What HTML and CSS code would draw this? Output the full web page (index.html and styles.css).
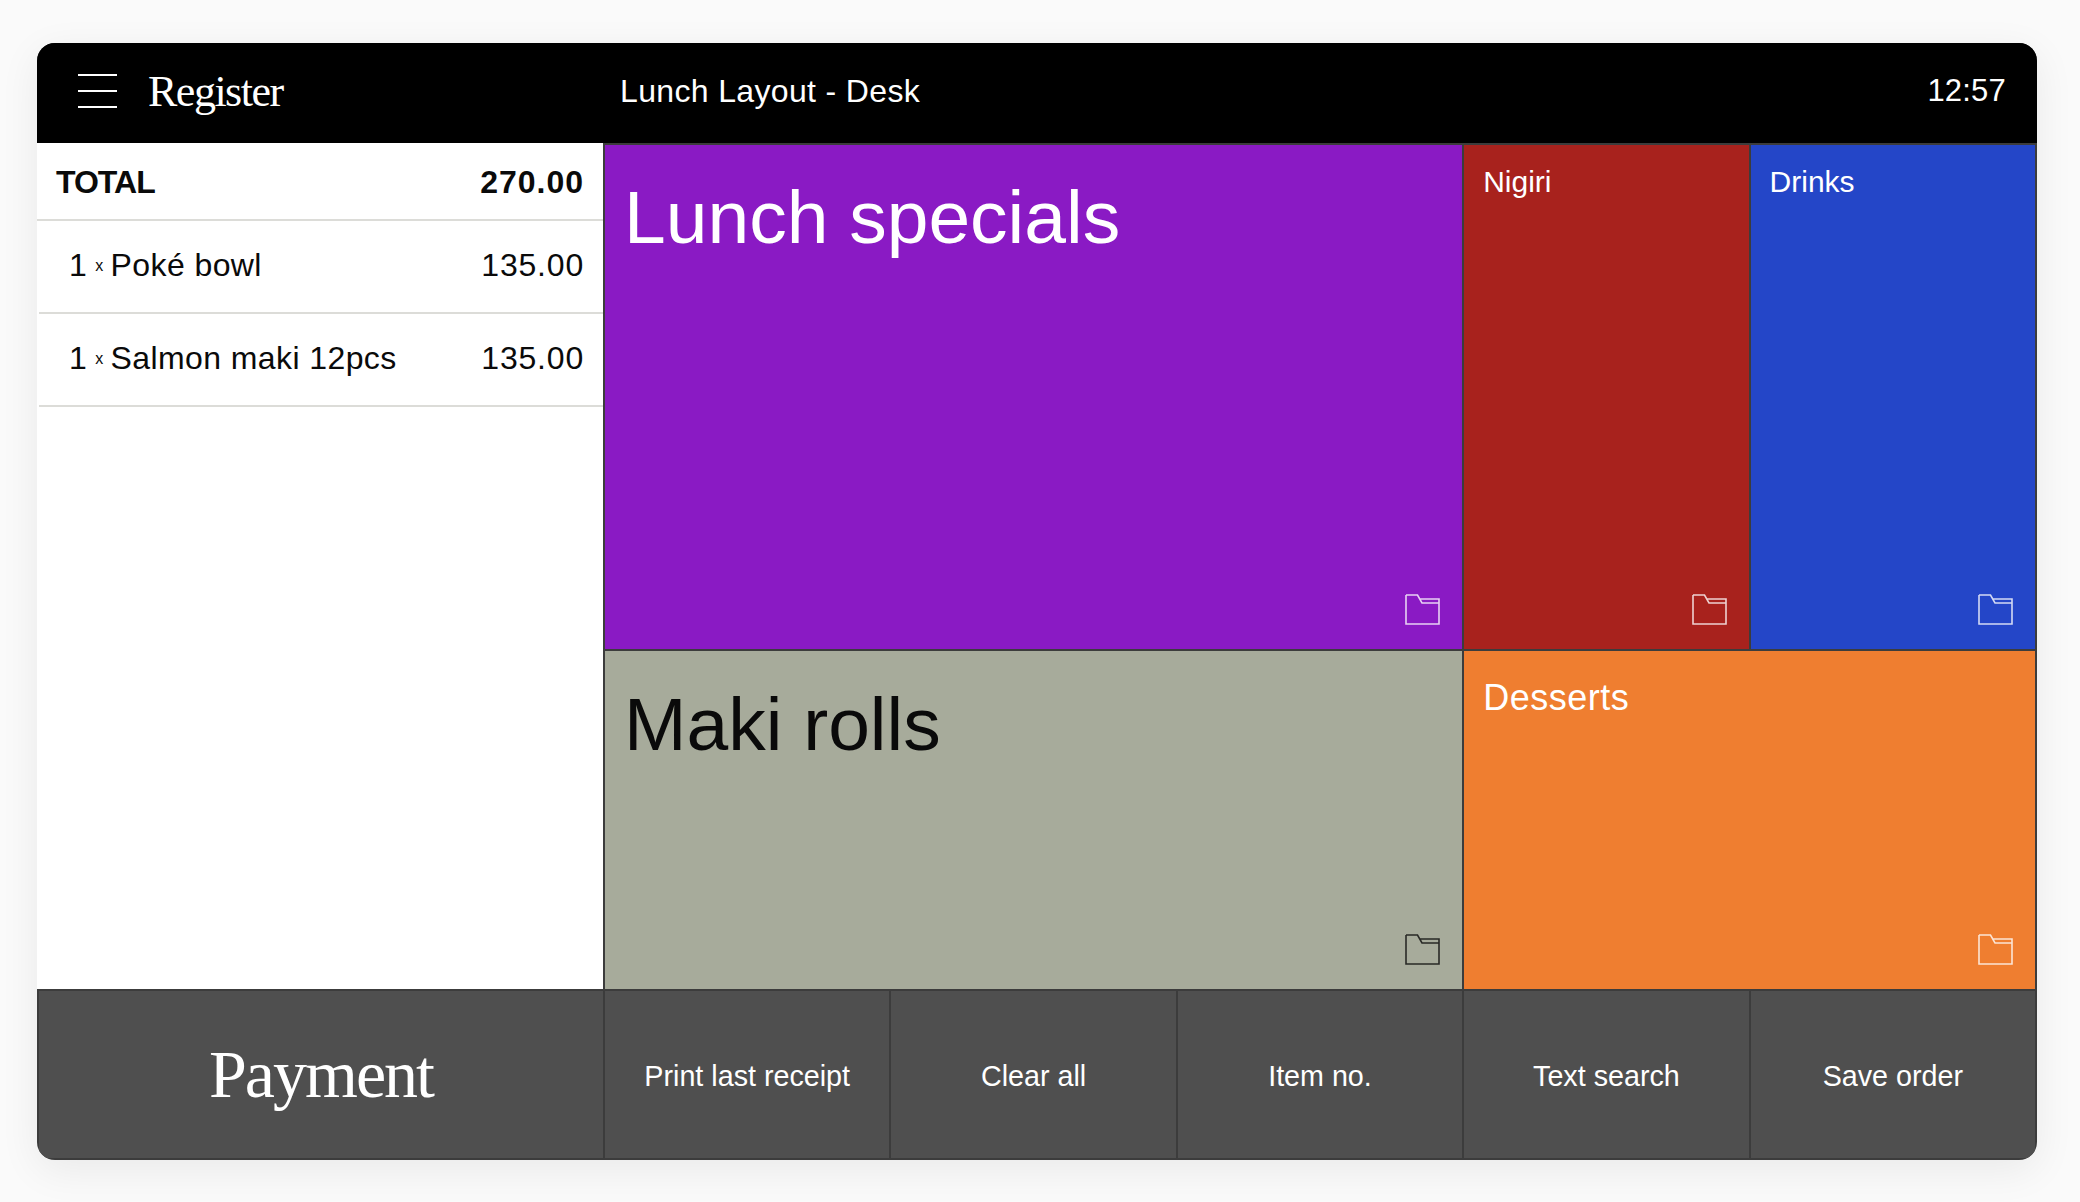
FILE: index.html
```html
<!DOCTYPE html>
<html lang="en">
<head>
  <meta charset="UTF-8" />
  <meta name="viewport" content="width=device-width, initial-scale=1.0" />
  <title>Register</title>
  <link rel="stylesheet" href="styles.css">
</head>
<body>
  <svg class="defs" width="0" height="0" aria-hidden="true">
    <symbol id="folder" viewBox="0 0 35 31">
      <path d="M1 1V30H34V5H14.5M1 1H12.5L17 9H34" fill="none" stroke="currentColor" stroke-width="1.6" />
    </symbol>
  </svg>

  <div class="register">
    <header class="topbar">
      <div class="brand">
        <button class="menu-btn" aria-label="Menu"><span></span><span></span><span></span></button>
        <span class="brand-name">Register</span>
      </div>
      <div class="layout-name">Lunch Layout - Desk</div>
      <div class="clock">12:57</div>
    </header>

    <main class="board">
      <section class="order">
        <div class="order-total">
          <span class="total-label">TOTAL</span>
          <span class="total-sum">270.00</span>
        </div>
        <div class="order-line">
          <span class="qty">1</span><span class="times">x</span><span class="item-name">Poké bowl</span>
          <span class="price">135.00</span>
        </div>
        <div class="order-line">
          <span class="qty">1</span><span class="times">x</span><span class="item-name">Salmon maki 12pcs</span>
          <span class="price">135.00</span>
        </div>
      </section>

      <a class="tile tile-big tile-purple">
        <span class="tile-label">Lunch specials</span>
        <svg class="folder"><use href="#folder" /></svg>
      </a>
      <a class="tile tile-red">
        <span class="tile-label">Nigiri</span>
        <svg class="folder"><use href="#folder" /></svg>
      </a>
      <a class="tile tile-blue">
        <span class="tile-label">Drinks</span>
        <svg class="folder"><use href="#folder" /></svg>
      </a>
      <a class="tile tile-big tile-sage">
        <span class="tile-label">Maki rolls</span>
        <svg class="folder"><use href="#folder" /></svg>
      </a>
      <a class="tile tile-wide tile-orange">
        <span class="tile-label">Desserts</span>
        <svg class="folder"><use href="#folder" /></svg>
      </a>

      <button class="action action-pay">Payment</button>
      <button class="action">Print last receipt</button>
      <button class="action">Clear all</button>
      <button class="action">Item no.</button>
      <button class="action">Text search</button>
      <button class="action">Save order</button>
    </main>
  </div>
</body>
</html>
```

FILE: styles.css
```css
body {
  margin: 0;
  height: 1202px;
  box-sizing: border-box;
  padding: 43px 43px 0 37px;
  overflow: hidden;
  background-color: #fafafa;
  font-family: "Liberation Sans", Arial, sans-serif;
  color: #0a0a0a;
}
.defs {
  position: absolute;
}
.register {
  width: 2000px;
  height: 1117px;
  display: flex;
  flex-direction: column;
  border-radius: 18px;
  overflow: hidden;
  background-color: #3c3c3c;
  box-shadow: 0 10px 40px rgba(0, 0, 0, 0.07);
}
.topbar {
  height: 96px;
  flex: none;
  display: grid;
  grid-template-columns: 583px 1fr auto;
  align-items: center;
  padding-right: 31px;
  padding-bottom: 4px;
  background-color: #000;
  color: #fff;
}
.brand {
  display: flex;
  align-items: center;
  padding-left: 41px;
}
.menu-btn {
  width: 39px;
  height: 34px;
  padding: 0;
  border: none;
  background: none;
  display: flex;
  flex-direction: column;
  justify-content: space-between;
  margin-right: 31px;
}
.menu-btn span {
  display: block;
  height: 2px;
  background-color: #fff;
}
.brand-name {
  font-family: "Liberation Serif", serif;
  font-size: 44px;
  letter-spacing: -1.5px;
}
.layout-name {
  font-size: 32px;
  letter-spacing: 0.35px;
}
.clock {
  font-size: 31px;
  letter-spacing: 0.2px;
}
.board {
  flex: 1;
  display: grid;
  grid-template-columns: 564px repeat(5, 1fr);
  grid-template-rows: 504px 338px 1fr;
  gap: 2px;
  padding: 2px;
  min-height: 0;
}
.order {
  grid-row: 1 / 3;
  background-color: #fff;
  margin: -2px 0 0 -2px;
}
.order-total {
  height: 73px;
  padding: 3px 19px 0 19px;
  display: flex;
  justify-content: space-between;
  align-items: center;
  font-size: 32px;
  font-weight: bold;
  border-bottom: 2px solid #dcdcd8;
}
.total-label {
  letter-spacing: -1px;
}
.total-sum {
  letter-spacing: 1px;
}
.order-line {
  height: 89px;
  display: flex;
  align-items: center;
  margin-left: 2px;
  padding: 0 19px 2px 30px;
  font-size: 32px;
  letter-spacing: 0.4px;
  border-bottom: 2px solid #dcdcd8;
}
.times {
  font-size: 16px;
  margin: 0 7px 0 8px;
}
.price {
  margin-left: auto;
  letter-spacing: 0.8px;
}
.tile {
  display: flex;
  flex-direction: column;
  padding: 20px 22px 24px 19px;
  color: #fff;
  font-size: 30px;
}
.tile-big {
  grid-column: span 3;
  padding-top: 29px;
  font-size: 75px;
}
.tile-wide {
  grid-column: span 2;
  padding-top: 26px;
  font-size: 36px;
  letter-spacing: 0.5px;
}
.tile-purple {
  background-color: #8a1ac4;
}
.tile-red {
  background-color: #a8221d;
}
.tile-blue {
  background-color: #2446c8;
}
.tile-sage {
  background-color: #a7ab9b;
  color: #0a0a0a;
  padding-top: 30px;
}
.tile-orange {
  background-color: #ef7e30;
}
.folder {
  width: 35px;
  height: 31px;
  margin-top: auto;
  align-self: flex-end;
  opacity: 0.8;
}
.action {
  border: none;
  padding: 3px 0 0;
  background-color: #4f4f4f;
  color: #fff;
  font-family: "Liberation Sans", Arial, sans-serif;
  font-size: 28.7px;
}
.action-pay {
  padding: 0;
  font-family: "Liberation Serif", serif;
  font-size: 68px;
  letter-spacing: -2px;
}
```
